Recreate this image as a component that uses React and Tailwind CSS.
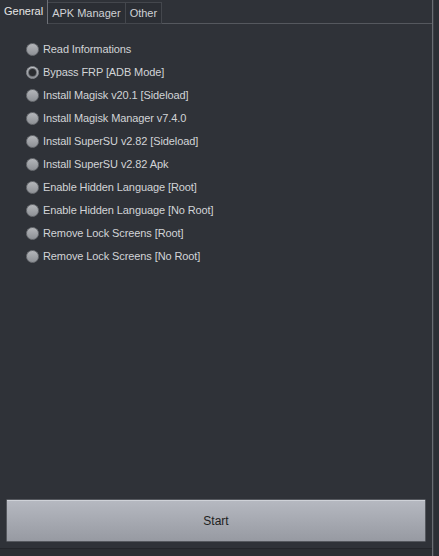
import React from "react";

const items = [
  "Read Informations",
  "Bypass FRP [ADB Mode]",
  "Install Magisk v20.1 [Sideload]",
  "Install Magisk Manager v7.4.0",
  "Install SuperSU v2.82 [Sideload]",
  "Install SuperSU v2.82 Apk",
  "Enable Hidden Language [Root]",
  "Enable Hidden Language [No Root]",
  "Remove Lock Screens [Root]",
  "Remove Lock Screens [No Root]",
];

function Radio({ checked }) {
  if (checked) {
    return (
      <span className="flex h-[13px] w-[13px] items-center justify-center rounded-full border border-[#8a8d92] bg-gradient-to-b from-[#c4c6ca] to-[#8d9096]">
        <span className="h-[7px] w-[7px] rounded-full bg-[#2a2c30] ring-1 ring-[#6a6d72]" />
      </span>
    );
  }
  return (
    <span className="h-[13px] w-[13px] rounded-full border border-[#6f7277] bg-gradient-to-b from-[#b4b6ba] to-[#8e9196]" />
  );
}

function Tab({ label, active }) {
  if (active) {
    return (
      <div className="flex h-[24px] items-center border-r border-[#6d7077] px-[4px] pb-[2px] text-[#e6e6e6]">
        {label}
      </div>
    );
  }
  return (
    <div className="mt-[2px] flex h-[22px] items-center border-b border-r border-t border-[#44474d] bg-[#2b2e34] px-[4px] text-[#cfd1d4]">
      {label}
    </div>
  );
}

export default function App() {
  return (
    <div
      className="flex h-[556px] w-[439px] bg-[#2f3238] text-[11px]"
      style={{ fontFamily: '"Liberation Sans", Arial, sans-serif' }}
    >
      <div className="flex w-[433px] flex-col border-r border-[#6a6d73]">
        <div className="flex">
          <Tab label="General" active />
          <Tab label="APK Manager" />
          <Tab label="Other" />
          <div className="flex-1 border-b border-[#55585e]" />
        </div>

        <div className="flex flex-1 flex-col">
          <div className="flex flex-col gap-[8px] pl-[26px] pt-[18px]">
            {items.map((label, i) => (
              <div key={label} className="flex h-[15px] items-center gap-[4px] tracking-[-0.1px] text-[#d2d4d7]">
                <Radio checked={i === 1} />
                <span>{label}</span>
              </div>
            ))}
          </div>

          <div className="flex-1" />

          <div className="px-[6px] pb-[6px]">
            <button className="flex h-[43px] w-full items-center justify-center rounded-[1px] border border-[#55585e] bg-gradient-to-b from-[#b6b9c1] to-[#979aa2] text-[12px] text-[#1e1f22] shadow-[inset_0_1px_0_#cfd2d8]">
              Start
            </button>
          </div>
          <div className="h-[8px] border-t border-[#24262b] bg-[#2b2e33]" />
        </div>
      </div>
      <div className="flex-1 border-l border-[#3b3e44] bg-[#2c2f35]" />
    </div>
  );
}
